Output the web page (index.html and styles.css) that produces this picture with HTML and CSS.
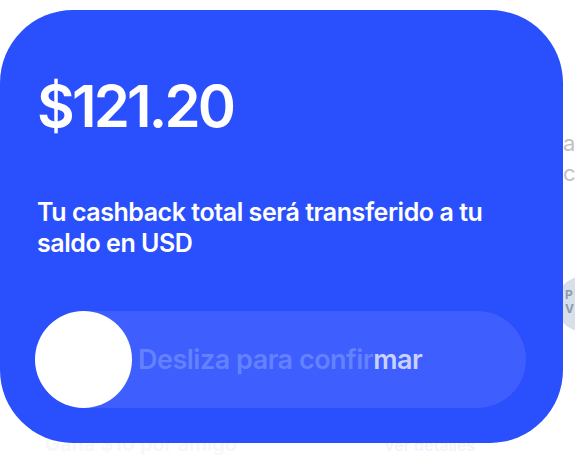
FILE: index.html
```html
<!DOCTYPE html>
<html>
<head>
  <meta charset="UTF-8">
  <title>Cashback</title>
  <link rel="stylesheet" href="styles.css">
</head>
<body>
  <div class="behind">
    <div class="peek-text">a<br>c</div>
    <div class="peek-badge">P<br>V</div>
    <div class="peek-bottom">
      <span>Gana $10 por amigo</span>
      <span class="peek-link">Ver detalles</span>
    </div>
  </div>

  <div class="card">
    <div class="amount">$121.20</div>
    <p class="note">Tu cashback total será transferido a tu saldo en USD</p>

    <div class="slider">
      <div class="knob"></div>
      <div class="slider-label"><span class="dim">Desliza para confir</span><span class="shine">mar</span></div>
    </div>
  </div>
</body>
</html>
```

FILE: styles.css
```css
body {
  margin: 0;
  background-color: #ffffff;
  font-family: Inter, "Noto Sans", sans-serif;
  width: 575px;
  height: 457px;
  overflow: hidden;
  position: relative;
}

/* things from the page below that peek out around the card */
.behind {
  position: absolute;
  inset: 0;
}
.peek-text {
  position: absolute;
  left: 563px;
  top: 128px;
  font-size: 22px;
  line-height: 30px;
  color: #c2c2c2;
}
.peek-badge {
  position: absolute;
  left: 556px;
  top: 276px;
  width: 56px;
  height: 56px;
  border-radius: 50%;
  background-color: #d9dfe8;
  color: #8c9bb0;
  font-size: 12px;
  font-weight: 700;
  line-height: 14px;
  padding: 12px 0 0 9px;
  box-sizing: border-box;
}
.peek-bottom {
  position: absolute;
  left: 45px;
  top: 432px;
  width: 430px;
  display: flex;
  justify-content: space-between;
  align-items: baseline;
  font-size: 20px;
  line-height: 24px;
  font-weight: 600;
  color: #f6f7f9;
}
.peek-link {
  font-size: 16px;
  color: #f3f4fa;
}

.card {
  position: relative;
  margin-top: 10px;
  width: 563px;
  height: 433px;
  box-sizing: border-box;
  padding: 67px 0 0 37px;
  background-color: #2a4ffd;
  border-radius: 73px;
  color: #ffffff;
}
.amount {
  font-size: 58px;
  line-height: 58px;
  font-weight: 600;
  letter-spacing: -2.8px;
}
.note {
  margin: 62px 0 0;
  width: 470px;
  font-size: 25px;
  line-height: 31px;
  font-weight: 600;
  letter-spacing: -0.45px;
}
.slider {
  margin: 52px 0 0 -2px;
  width: 491px;
  height: 97px;
  border-radius: 49px;
  background-color: #3e5efe;
  display: flex;
  align-items: center;
  gap: 6px;
}
.knob {
  width: 97px;
  height: 97px;
  border-radius: 50%;
  background-color: #ffffff;
  flex-shrink: 0;
}
.slider-label {
  font-size: 27px;
  font-weight: 600;
  letter-spacing: -0.5px;
}
.dim {
  color: #6482ff;
}
.shine {
  color: #c9d2ff;
}
```
